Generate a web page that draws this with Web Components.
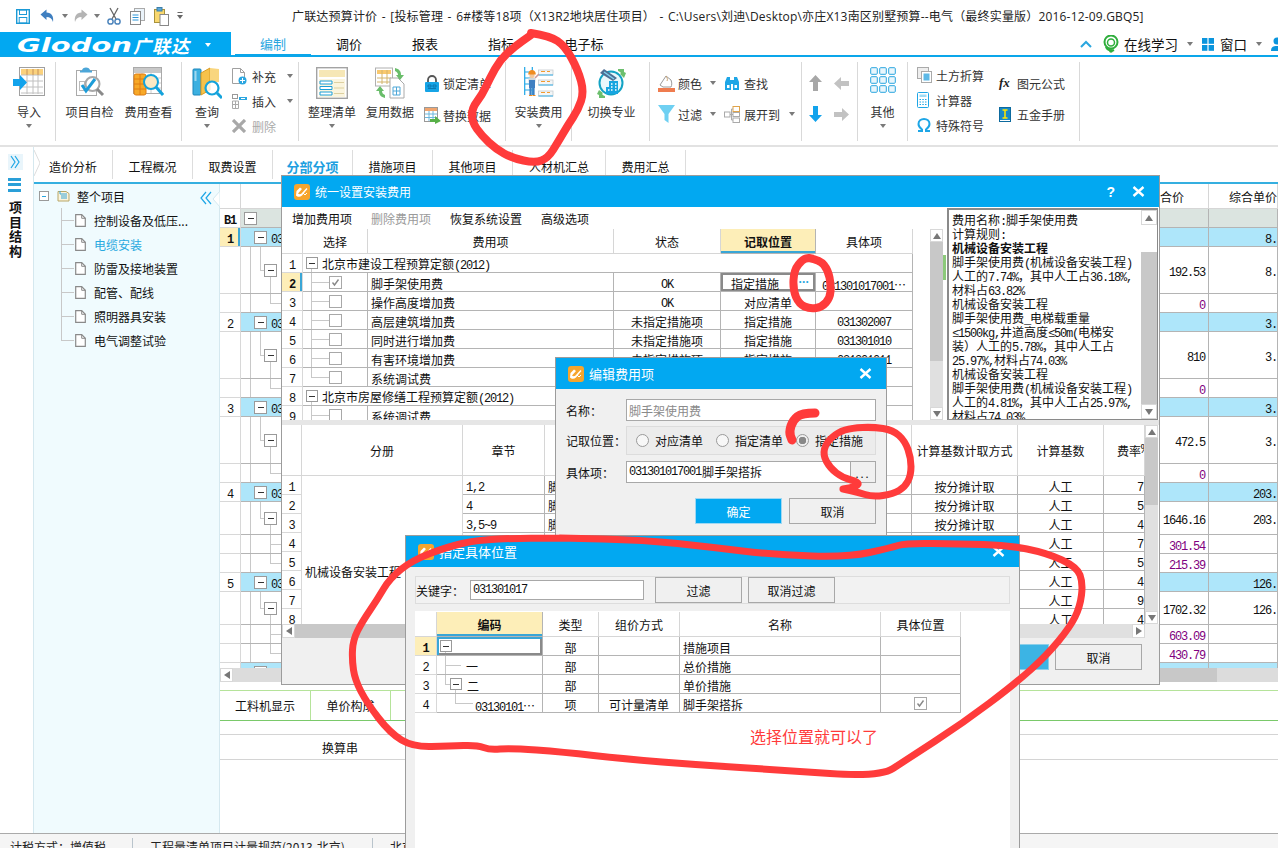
<!DOCTYPE html>
<html lang="zh">
<head>
<meta charset="utf-8">
<title>广联达预算计价</title>
<style>
html,body{margin:0;padding:0;background:#fff;overflow:hidden}
body{font:12px "Noto Sans CJK SC","Liberation Sans",sans-serif;color:#111}
</style>
</head>
<body>
<gl-app></gl-app>
<script>
const UI='"Noto Sans CJK SC","Liberation Sans",sans-serif';
const TB='"Liberation Serif","Noto Sans CJK SC",serif';
const MS='font-family:\'Liberation Mono\',monospace;letter-spacing:-1.2px';
const m=s=>s.replace(/[\x21-\x7e≤]+/g,x=>`<span style="${MS}">${x}</span>`);
const ICONS={
save:[14,15,`<rect x=".7" y=".7" width="12.6" height="13.6" fill="#fff" stroke="#1b9ad6" stroke-width="1.4"/><rect x="3.5" y="1" width="7" height="4.5" fill="none" stroke="#1b9ad6"/><rect x="3.2" y="8.5" width="7.6" height="5.5" fill="none" stroke="#1b9ad6"/>`],
undo:[14,14,`<path d="M.5 5.5 6.5 .5v3c5 0 7.5 4 6.500 9.500-1-3.500-3-5-6.500-5v3z" fill="#3f7fc0"/>`],
redo:[14,14,`<path d="M13.500 5.500 7.500 .5v3c-5 0-7.500 4-6.500 9.500 1-3.500 3-5 6.500-5v3z" fill="#b4b4b4"/>`],
cut:[14,18,`<path d="M3 1l6 11M11 1 5 12" stroke="#666" stroke-width="1.300" fill="none"/><circle cx="3.500" cy="14.500" r="2.600" fill="none" stroke="#4f86bd" stroke-width="1.500"/><circle cx="10.500" cy="14.500" r="2.600" fill="none" stroke="#4f86bd" stroke-width="1.500"/>`],
copy:[15,17,`<rect x="4.500" y=".5" width="10" height="12" fill="#eaf3fa" stroke="#aaa"/><rect x=".5" y="3.500" width="10" height="13" fill="#fff" stroke="#888"/><path d="M2.500 7h6M2.500 9.500h6M2.500 12h6" stroke="#2f96d8"/>`],
paste:[15,19,`<rect x=".5" y="2.500" width="10" height="13" fill="#f9d86f" stroke="#a8923c"/><rect x="3" y=".5" width="5" height="3.500" fill="#5aa7d8" stroke="#3d7fa8"/><rect x="6" y="7.500" width="8.500" height="11" fill="#fff" stroke="#888"/>`],
qdd:[6,8,`<path d="M.5 .5h5" stroke="#666"/><path d="M0 3h6L3 7z" fill="#666"/>`],
import:[32,30,`<rect x="6.500" y=".5" width="25" height="28" fill="#fff" stroke="#a0a0a0"/><rect x="8" y="2" width="22" height="6" fill="#fbd27d"/><path d="M8 8h22M8 14h22M8 20h22M8 26h22M14 2v25M20 2v25M25 2v25" stroke="#c0c0c0"/><path d="M14 8V2M20 8V2M25 8V2" stroke="#e39a3b"/><path d="M0 12h7V8l7 7.500-7 7.500v-4H0z" fill="#12a3ec"/>`],
check:[30,30,`<rect x="1.500" y="3.500" width="20" height="25" fill="#fff" stroke="#aaa"/><path d="M7 3.500c0-2 2-3 4-3s4 1 4 3h2v2H5v-2z" fill="#4ca6d8"/><rect x="4.500" y="14.500" width="5" height="9" fill="#fff" stroke="#bbb"/><circle cx="17.500" cy="17" r="7" fill="#fff" stroke="#a9a9a9" stroke-width="2"/><path d="M22 22l6 6" stroke="#8a8a8a" stroke-width="3"/><path d="M7 18l4 6 9-12" fill="none" stroke="#1d9cd8" stroke-width="3"/>`],
fee:[31,30,`<rect x=".5" y=".5" width="28" height="26" fill="#fff" stroke="#aaa"/><rect x="1" y="1" width="27" height="5" fill="#c8c8c8"/><path d="M1 11h27M1 16h27M1 21h27M9 6v20M18 6v20" stroke="#ccc"/><rect x="1" y="7" width="12" height="21" rx="2" fill="#f7a928" stroke="#e07d12"/><path d="M1 12h12M1 17h12M1 22h12M7 7v21" stroke="#e07d12"/><circle cx="18" cy="15" r="7" fill="#fbe9c4" stroke="#14a3dc" stroke-width="2"/><path d="M23 20l7 8" stroke="#14a3dc" stroke-width="3"/>`],
query:[30,32,`<rect x="1" y="2" width="8" height="26" rx="1" fill="#3cb0e0" stroke="#1a86bb"/><path d="M9 6l9-5v22l-9 5z" fill="#f6c24b" stroke="#d99c25"/><path d="M18 1l9 1v13h-9z" fill="#f9d67e"/><rect x="2.500" y="4" width="2" height="10" fill="#9fd8ef"/><circle cx="20" cy="21" r="6.500" fill="#fff" fill-opacity=".8" stroke="#14a3dc" stroke-width="2.200"/><path d="M25 26l5 5" stroke="#14a3dc" stroke-width="3"/>`],
add:[15,17,`<path d="M.5 .5h8l4 4v11H.5z" fill="#fff" stroke="#a0a0a0"/><path d="M8.500 .5v4h4" fill="none" stroke="#a0a0a0"/><circle cx="10.500" cy="12.500" r="4" fill="#2ba6e0"/><path d="M8 12.500h5M10.500 10v5" stroke="#fff"/>`],
insert:[15,15,`<rect x=".5" y=".5" width="5" height="4" fill="none" stroke="#999"/><rect x="7" y="3" width="8" height="3" fill="#2ba6e0"/><path d="M9 4.500h4" stroke="#fff"/><path d="M.5 7h6v7.500h-6zM.5 10.500h6M3.500 7v7.500" fill="none" stroke="#aaa"/>`],
del:[14,14,`<path d="M1 1l12 12M13 1 1 13" stroke="#a8a8a8" stroke-width="3.200"/>`],
org:[32,32,`<rect x=".7" y=".7" width="30.600" height="30.600" fill="#fff" stroke="#a3a3a3" stroke-width="1.400"/><rect x="3" y="3" width="26" height="7" fill="#f6e7b6"/><path d="M3 12h26v18H3z" fill="#fbf5de"/><path d="M4 14h12v3H4zM4 19.500h12v3H4zM4 25h12v3H4z" fill="#fff" stroke="#1c9fd8"/><path d="M18 15.500h10M18 21h10M18 26.500h10" stroke="#ddd0a0"/>`],
reuse:[30,32,`<rect x=".5" y="1" width="17" height="18" fill="#fff" stroke="#b0b0b0"/><rect x="2" y="3" width="14" height="4" fill="#f9c96e"/><path d="M2 11h14M2 15h14M7 3v14M12 3v14" stroke="#d3b46d"/><path d="M15 11h8l6 6v14H15z" fill="#fff" stroke="#aaa"/><path d="M18 20h7v8h-7zM18 24h7M21.500 20v8" fill="none" stroke="#4fa8d8"/><path d="M20 1c4 1 6 3 6 7h3l-4 5-4-5h2c0-2-1-3-3-4z" fill="#69bd6a"/><path d="M10 31c-4-1-6-3-6-7H1l4-5 4 5H7c0 2 1 3 3 4z" fill="#69bd6a"/>`],
lock:[16,17,`<path d="M4 7V5a4 4 0 018 0v2" fill="none" stroke="#555" stroke-width="1.800"/><rect x="1" y="7" width="14" height="10" rx="1" fill="#16a4e6"/><path d="M4 10h3v2H4zM9 10h3v2H9zM4 13.500h8" stroke="#0a6fa6" stroke-width=".8" fill="none"/>`],
replace:[17,17,`<rect x=".5" y=".5" width="13" height="14" fill="#fff" stroke="#999"/><rect x="1" y="1" width="12" height="3" fill="#f1a56e"/><path d="M1 7h12M1 10.500h12M5 4v10M9 4v10" stroke="#6cb7dc"/><path d="M6 12h5V9l6 5-6 3v-2H6z" fill="#58b048"/>`],
install:[30,30,`<path d="M.7 0v28M8.300 0v28M.7 5h7.600M.7 11h7.600M.7 17h7.600M.7 23h7.600" stroke="#1ea6e6" stroke-width="1.200" fill="none"/>
<g fill="#f4f6f7" stroke="#c6ccd0" stroke-width=".8"><rect x="14.500" y="3" width="14.500" height="5"/><rect x="14.500" y="13" width="14.500" height="5"/><rect x="14.500" y="24" width="14.500" height="5"/></g>
<path d="M17 4.500h4M23 4.500h3" stroke="#f39a2e"/><path d="M14.500 8h14.500M14.500 18h14.500M14.500 29h14.500" stroke="#39aee6"/><path d="M17 14.500h4M23 14.500h3M17 25.500h4M23 25.500h3" stroke="#f39a2e"/>
<path d="M11 11l4-4" stroke="#c99" stroke-width="1.600"/><circle cx="8" cy="8.500" r="2.600" fill="#f3c79c"/><path d="M4.200 7.500c0-3 1.600-4.500 3.800-4.500s3.800 1.500 3.800 4.500z" fill="#f08c21"/><rect x="4.500" y="11" width="7" height="4.500" fill="#cfd6da"/><rect x="5" y="13" width="6" height="8" fill="#3f80c2"/><path d="M6.500 21v7M9.500 21v7" stroke="#3f80c2" stroke-width="2.200"/><path d="M5 28.500h3M8.500 28.500h3" stroke="#f08c21" stroke-width="1.200"/>`],
switch:[30,32,`<circle cx="14" cy="16" r="11.500" fill="#e8f7fc" stroke="#13a3c4" stroke-width="2"/><path d="M3 6l4-4 13 9-4 3z" fill="#4f6f94"/><path d="M7 5l10 7" stroke="#7fd3ef" stroke-width="1.400"/><path d="M12 14h9v13H9v-7h3z" fill="#17a5e0"/><path d="M14 17h1.500M18 17h1.500M14 20h1.500M18 20h1.500M11 23h1.500M14 23h1.500M18 23h1.500" stroke="#fff" stroke-width="1.500"/><path d="M21 2l6 0v3l2 1-2 5-4-4 1-1c-1-1-2-2-3-2z" fill="#6cbf6e"/><path d="M8 31l-6 0v-3l-2-1 2-4 4 3-1 1c1 1 2 2 3 2z" fill="#6cbf6e"/>`],
color:[17,18,`<path d="M2 11 8 2l5 4c1 3 1 5 0 7H5z" fill="#fff" stroke="#9a9a9a"/><path d="M8 2c1 2 2 3 1 5" stroke="#c9a271" fill="none"/><rect y="14" width="17" height="4" fill="#ef7c4f"/>`],
find:[16,16,`<path d="M1 7l2-5h3v3h4V2h3l2 5v8h-6V9H7v6H1z" fill="#1ea6e6"/><rect x="3" y="10" width="2.500" height="3" fill="#fff"/><rect x="10.500" y="10" width="2.500" height="3" fill="#fff"/>`],
filter:[17,18,`<path d="M0 0h17L10.500 9v9l-4-3V9z" fill="#6fd0f2"/>`],
expand:[16,17,`<rect x=".5" y="6" width="5.500" height="5" fill="#fff" stroke="#aaa"/><rect x="9" y=".5" width="6.500" height="5" fill="#fff" stroke="#e0a44b"/><rect x="9" y="6.500" width="6.500" height="4" fill="#fff" stroke="#aaa"/><rect x="9" y="12" width="6.500" height="4.500" fill="#fff" stroke="#aaa"/><path d="M6 8.500h3M7.500 3v11M7.500 3H9M7.500 14H9" stroke="#aaa" fill="none"/>`],
aup:[13,16,`<path d="M6.500 0 13 7H9v9H4V7H0z" fill="#a7a7a7"/>`],
aleft:[15,13,`<path d="M0 6.500 7 0v4h8v5H7v4z" fill="#c2c2c2"/>`],
adown:[13,16,`<path d="M6.500 16 13 9H9V0H4v9H0z" fill="#12a3ec"/>`],
aright:[15,13,`<path d="M15 6.500 8 0v4H0v5h8v4z" fill="#c2c2c2"/>`],
other:[26,26,`<g fill="#e9f6fc" stroke="#2aa6df"><rect x=".7" y=".7" width="6.600" height="6.600" rx="1"/><rect x="9.700" y=".7" width="6.600" height="6.600" rx="1"/><rect x="18.700" y=".7" width="6.600" height="6.600" rx="1"/><rect x=".7" y="9.700" width="6.600" height="6.600" rx="1"/><rect x="9.700" y="9.700" width="6.600" height="6.600" rx="1"/><rect x="18.700" y="9.700" width="6.600" height="6.600" rx="1"/><rect x=".7" y="18.700" width="6.600" height="6.600" rx="1"/><rect x="9.700" y="18.700" width="6.600" height="6.600" rx="1"/><rect x="18.700" y="18.700" width="6.600" height="6.600" rx="1"/></g>`],
earth:[15,16,`<rect x=".5" y=".5" width="11" height="11" fill="#eee" stroke="#aaa"/><rect x="4.500" y="4.500" width="10" height="11" fill="#fff" stroke="#aaa"/><rect x="6.500" y="6.500" width="6" height="7" fill="#5cb8e6"/>`],
calc:[12,16,`<rect x=".5" y=".5" width="11" height="15" rx="1" fill="#fff" stroke="#1ea6e6"/><rect x="2.500" y="2.500" width="7" height="2.500" fill="#9fdcf5"/><path d="M2.500 7.500h1.500M5.300 7.500h1.500M8 7.500h1.500M2.500 10h1.500M5.300 10h1.500M8 10h1.500M2.500 12.500h1.500M5.300 12.500h1.500M8 12.500h1.500" stroke="#1ea6e6"/>`],
omega:[14,14,`<path d="M1 13h4v-1.500C3 10 1.500 8.500 1.500 6 1.500 3 4 1 7 1s5.500 2 5.500 5c0 2.500-1.500 4-3.500 5.500V13h4" fill="none" stroke="#1ea6e6" stroke-width="2"/>`],
manual:[12,15,`<rect x=".5" y=".5" width="11" height="14" fill="#1789c9" stroke="#0d6a9e"/><path d="M3.500 3h5M6 3v8M3.500 11h5" stroke="#ffe600" stroke-width="1.500"/><path d="M1 13.500h10" stroke="#fff"/>`],
up:[12,8,`<path d="M1 7l5-5 5 5" fill="none" stroke="#2aa6df" stroke-width="2"/>`],
headset:[16,18,`<circle cx="8" cy="7" r="6.500" fill="none" stroke="#2fae3c" stroke-width="2"/><circle cx="8" cy="7.500" r="3.500" fill="#fff" stroke="#2fae3c" stroke-width="1.500"/><path d="M3 12c2 4 6 4 8 3" fill="none" stroke="#2fae3c" stroke-width="2.400"/><circle cx="8" cy="16" r="1.800" fill="#2fae3c"/>`],
win:[12,13,`<rect width="5.400" height="5.800" fill="#0b95dd"/><rect x="6.600" width="5.400" height="5.800" fill="#0b95dd"/><rect y="7" width="5.400" height="5.800" fill="#0b95dd"/><rect x="6.600" y="7" width="5.400" height="5.800" fill="#0b95dd"/>`],
user:[12,14,`<circle cx="6" cy="4" r="3.500" fill="#0b95dd"/><path d="M0 14c0-4 2-5 6-5s6 1 6 5z" fill="#0b95dd"/>`],
doc:[11,13,`<path d="M.7.7h6l3.600 3.600v8H.7z" fill="#fff" stroke="#8a8a8a" stroke-width="1.200"/><path d="M6.700.7v3.600h3.600" fill="none" stroke="#8a8a8a"/>`],
book:[13,12,`<path d="M1 1.500h8l3 2v7.500H1z" fill="#fbf4dc" stroke="#b8a768"/><path d="M3 1v3h7M4 6h6M4 8h6" stroke="#3ba6d8" fill="none"/>`],
dlg:[16,16,`<rect width="16" height="16" rx="3" fill="#f6a52d"/><path d="M2.500 7 6 3.500l2 1.500-4 4.500c1 1 2.500 1 3.500 0l5-5.500 1 1-5.500 6.500c-2 1.800-4.500 1.500-6 0z" fill="#fff"/><path d="M9 9l2 2 2-2" stroke="#fff" fill="none"/>`],
x:[13,11,`<path d="M1.500 1l10 9M11.500 1l-10 9" stroke="#fff" stroke-width="2.400"/>`],
dchev:[12,14,`<path d="M6 1 1 7l5 6M11 1 6 7l5 6" fill="none" stroke="#1ea6e6" stroke-width="1.200"/>`],
rchev:[11,14,`<path d="M1 1l4 6-4 6M5 1l4 6-4 6" fill="none" stroke="#1ea6e6" stroke-width="1.200"/>`]
};
const make=(name,styles,markup,setup)=>{customElements.define(name,class extends HTMLElement{
  connectedCallback(){ if(this.shadowRoot) return;
    const r=this.attachShadow({mode:'open'});
    const mk=typeof markup==='function'?markup(this):markup;
    r.innerHTML=`<style>${styles}</style>${mk}`;
    if(setup) setup(this,r);
  }
});};
const dd=(ml=0)=>`<i style="display:inline-block;width:0;height:0;border:3px solid transparent;border-top:4px solid #7a7a7a;border-bottom:0;margin-left:${ml}px;flex:none"></i>`;
make('gl-icon',':host{display:inline-flex;flex:none;line-height:0}',h=>{
  const [w,ht,s]=ICONS[h.getAttribute('n')];
  return `<svg xmlns="http://www.w3.org/2000/svg" width="${w}" height="${ht}" viewBox="0 0 ${w} ${ht}">${s}</svg>`;});

/* ---------- top chrome ---------- */
make('gl-titlebar',`:host{display:flex;height:32px;align-items:center;background:#fff;font:12px "Open Sans","Noto Sans CJK SC",sans-serif;color:#222;flex:none;white-space:nowrap}
.q{display:flex;align-items:center;width:292px;flex:none;padding-left:16px;box-sizing:border-box}
span{word-spacing:1.2px;letter-spacing:.18px}`,
`<div class="q"><gl-icon n="save"></gl-icon><gl-icon n="undo" style="margin-left:10px"></gl-icon>${dd(8)}<gl-icon n="redo" style="margin-left:6px"></gl-icon>${dd(6)}<gl-icon n="cut" style="margin-left:7px"></gl-icon><gl-icon n="copy" style="margin-left:9px"></gl-icon><gl-icon n="paste" style="margin-left:9px"></gl-icon><gl-icon n="qdd" style="margin-left:8px"></gl-icon></div>
<span>广联达预算计价 - [投标管理 - 6#楼等18项（X13R2地块居住项目） - C:\\Users\\刘迪\\Desktop\\亦庄X13南区别墅预算--电气（最终实量版）2016-12-09.GBQ5]</span>`);

make('gl-tabbar',`:host{display:flex;height:25px;box-sizing:border-box;border-bottom:2px solid #0aa6ea;flex:none;font:13px ${UI};color:#111;overflow:hidden;white-space:nowrap}
.logo{width:231px;height:25px;background:#02a8f1;color:#fff;display:flex;align-items:center;flex:none;position:relative;overflow:hidden}
.g{font:italic bold 20px "DejaVu Sans",sans-serif;display:inline-block;transform:scaleX(1.45);transform-origin:0 50%;margin-left:17px;width:116px;letter-spacing:0}
.c{font:italic bold 18px ${UI};letter-spacing:1px}
.tab{width:76px;text-align:center;line-height:23px;flex:none}
.on{color:#2aa6df;background:#fff;margin-left:4px;box-shadow:inset 0 -1px #0aa6ea}
.w{width:90px}
.r{margin-left:auto;width:198px;flex:none;display:flex;align-items:center;padding-top:1px;height:23px;box-sizing:border-box;font-size:13.500px;overflow:hidden}
.r span{flex:none}`,
`<div class="logo"><span class="g">Glodon</span><span class="c">广联达</span>${dd(15).replace(/#7a7a7a/,'#fff')}</div>
<div class="tab on">编制</div><div class="tab">调价</div><div class="tab">报表</div><div class="tab">指标</div><div class="tab w">电子标</div>
<div class="r"><gl-icon n="up" style="margin-left:0"></gl-icon><gl-icon n="headset" style="margin-left:11px"></gl-icon><span style="margin-left:5px">在线学习</span>${dd(9)}<gl-icon n="win" style="margin-left:9px"></gl-icon><span style="margin-left:6px">窗口</span>${dd(9)}<gl-icon n="user" style="margin-left:9px;flex:none"></gl-icon></div>`);

make('gl-ribbon',`:host{display:flex;height:90px;box-sizing:border-box;border-bottom:2px solid #e2e2e2;flex:none;font:12px ${UI};color:#333;background:#fff;padding-top:5px}`,`<slot></slot>`);
make('gl-group',`:host{display:flex;height:79px;box-sizing:border-box;border-right:1px solid #d9d9d9;flex:none}`,'<slot></slot>',(h)=>{
  h.style.width=h.getAttribute('w')+'px'; if(h.hasAttribute('pl')) h.style.paddingLeft=h.getAttribute('pl')+'px';});
make('gl-big',`:host{display:flex;flex-direction:column;align-items:center;flex:none;white-space:nowrap;color:#333}
.i{height:33px;margin-top:5px;display:flex;align-items:flex-start;justify-content:center}
.t{line-height:14px;margin-top:5px}
.a{height:4px;margin-top:5px;display:flex}`,
h=>`<div class="i"><gl-icon n="${h.getAttribute('n')}"></gl-icon></div><div class="t"><slot></slot></div><div class="a">${h.hasAttribute('dd')?dd():''}</div>`,
h=>{h.style.width=h.getAttribute('w')+'px';});
make('gl-stack',`:host{display:flex;flex-direction:column;flex:none}`,'<slot></slot>',h=>{
  h.style.paddingTop=(h.getAttribute('pt')||0)+'px'; h.style.gap=(h.getAttribute('gap')||0)+'px';
  if(h.hasAttribute('w')) h.style.width=h.getAttribute('w')+'px'; if(h.hasAttribute('ml')) h.style.marginLeft=h.getAttribute('ml')+'px';});
make('gl-small',`:host{display:flex;align-items:center;height:20px;white-space:nowrap;color:#333}
:host([dis]){color:#aaa}
.b{display:flex;justify-content:flex-start;align-items:center;flex:none}
i.f{font:italic bold 13px "Liberation Serif",serif;color:#222}`,
h=>{const n=h.getAttribute('n');const ic=n==='fx'?'<i class="f">fx</i>':`<gl-icon n="${n}"></gl-icon>`;
return `<div class="b" style="width:${h.getAttribute('iw')}px">${ic}</div><slot></slot>${h.hasAttribute('dd')?dd(+h.getAttribute('dd')):''}`;});

/* ---------- left rail + tree ---------- */
make('gl-nav',`:host{display:flex;flex-direction:column;align-items:center;width:34px;box-sizing:border-box;border-right:1px solid #d5e8ef;flex:none;font:bold 13px ${UI};color:#111}
.t{width:15px;height:16px;background:#e9f5fb;margin-top:7px;margin-right:3px;display:flex;align-items:center;justify-content:center}
.h{width:13px;height:3px;background:#2a9fd8;margin-right:4px;box-shadow:0 5px 0 #2a9fd8,0 11px 0 #2a9fd8;margin-top:8px}
.v{margin-top:20px;margin-right:3px;writing-mode:vertical-rl;letter-spacing:1.400px;line-height:14px;text-orientation:upright}`,
`<div class="t"><gl-icon n="rchev"></gl-icon></div><div class="h"></div><div class="v">项目结构</div>`);
const L='#c8c8c8';
const ln=(x,y,w,h,c=L)=>`linear-gradient(${c},${c}) ${x} ${y}/${w} ${h} no-repeat`;
make('gl-tree',`:host{display:block;width:186px;flex:none;box-sizing:border-box;background:#f0fbfe;border-right:1px solid #d5e8ef;font:12px ${UI};color:#111;position:relative}
.r{display:flex;align-items:center;height:24px;white-space:nowrap}
.bx{width:8px;height:8px;border:1px solid #9a9a9a;background:${ln('center','center','4px','1px','#2aa6df')} #fff;margin-left:5px;flex:none}
.sel{color:#29a9e0}
svg.n{position:absolute;right:-1px;top:7px}`,
()=>{const it=['控制设备及低压...','电缆安装','防雷及接地装置','配管、配线','照明器具安装','电气调整试验'];
return `<div class="r"><i class="bx"></i><gl-icon n="book" style="margin-left:8px"></gl-icon><span style="margin-left:7px;font-size:12px">整个项目</span><gl-icon n="dchev" style="margin-left:auto;margin-right:7px;margin-top:4px"></gl-icon></div>`+
it.map((t,i)=>`<div class="r ${i==1?'sel':''}" style="padding-left:41px;background:${ln('27px','0','1px',i==5?'50%':'100%')},${ln('27px','50%','13px','1px')}"><gl-icon n="doc"></gl-icon><span style="margin-left:8px">${t}</span></div>`).join('')+
`<svg class="n" width="8" height="16" viewBox="0 0 8 16"><path d="M8 0 1 8l7 8z" fill="#fff" stroke="#d5e8ef"/></svg>`;});

make('gl-pagetabs',`:host{display:flex;height:37px;box-sizing:border-box;border-bottom:2px solid #35afe0;flex:none;font:12px ${UI};color:#111;padding-top:3px;align-items:flex-start}
.t{height:29px;line-height:34px;text-align:center;border-right:1px solid #ddd;flex:none;white-space:nowrap}
.on{color:#1e9fe0;font-weight:bold;font-size:13px}
svg{flex:none}`,
()=>{const T=[['造价分析',73,0,6],['工程概况',80],['取费设置',80],['分部分项',80,1],['措施项目',80],['其他项目',80],['人材机汇总',93],['费用汇总',80]];
return `<svg width="6" height="29" viewBox="0 0 6 29"><path d="M0 0l6 13L0 26" fill="none" stroke="#ddd"/></svg>`+T.map(([t,w,a,p])=>`<div class="t ${a?'on':''}" style="width:${w}px;box-sizing:border-box;padding-right:${p||0}px">${t}</div>`).join('');});

/* ---------- generic table ---------- */
const TCSS=`:host{display:block;overflow:hidden;background:#fff;font:12px ${TB};color:#111;flex:none}
.g{display:grid}
.c{border-right:1px solid #b4b4b4;border-bottom:1px solid #b4b4b4;display:flex;align-items:center;justify-content:center;white-space:nowrap;overflow:hidden;min-width:0;box-sizing:border-box;background-color:#fff;padding-top:2px}
.l{justify-content:flex-start;padding-left:3px}
.r{justify-content:flex-end;padding-right:3px}
.n{border-color:#d8d8d8}
.h{border-color:#d6d6d6;font-family:${UI};padding-top:0}
.cn{font-family:${UI}}
.s{background-color:#fdeeb8;font-weight:bold;box-shadow:inset -2px 0 #3aa6d6}
.a{background-color:#fdeeb8;font-weight:bold;box-shadow:inset 0 -2px #3aa6d6;font-family:${UI};padding-top:0}
.b{background-color:#aee6fa}
.gh{background-color:#dbe4e0}
.p{color:#800080}
.box{display:inline-block;width:10px;height:10px;border:1px solid #9a9a9a;background:${ln('center','center','6px','1px','#333')} #fff;flex:none;margin-top:-2px}
.m{width:11px;height:11px}
.chk{display:inline-flex;width:11px;height:11px;border:1px solid #a8a8a8;background:#fff;flex:none;margin-top:-2px}
.sc{box-shadow:inset 0 0 0 2px #8a8a8a;justify-content:flex-start;padding-left:10px;position:relative}
.dots{position:absolute;right:6px;top:2px;color:#2aa6df;font:bold 12px "Liberation Sans",sans-serif;letter-spacing:-.5px}
.cur{box-shadow:inset 2px 2px 0 0 #3aa6d6,inset -2px -2px 0 #8a8a8a}
.nm{padding-top:6px}
.sh{position:relative;top:2px}`;
const check=`<i class="chk"><svg width="11" height="11" viewBox="0 0 11 11"><path d="M2.500 5.500l2 2.500 4-5.500" fill="none" stroke="#888" stroke-width="1.400"/></svg></i>`;
const empty=`<i class="chk"></i>`;
const ELL='<span style="font-family:\'Noto Sans CJK SC\'">…</span>';
const renderCells=rows=>rows.flat().map(c=>{ if(typeof c==='string') c={t:c};
  const st=[c.st||'']; if(c.sp) st.push(`grid-column:span ${c.sp}`); if(c.rs) st.push(`grid-row:span ${c.rs}`); if(c.bg) st.push(`background:${c.bg}`);
  const t=c.t||''; const body=t.includes('<')?t:m(t);
  const nm=/^[\x21-\x7e]+$/.test(t)&&!/\bh\b/.test(c.c||'')?' nm':'';
  return `<div class="c ${c.c||''}${nm}" style="${st.join(';')}">${body}</div>`;}).join('');
const makeTable=(name,o)=>make(name,TCSS,()=>`<div class="g" style="grid-template-columns:${o.cols.map(x=>x+'px').join(' ')};grid-template-rows:${o.rows};grid-auto-rows:${o.auto||19}px">${renderCells(o.data())}</div>`,h=>{h.style.width=o.cols.reduce((a,b)=>a+b,0)+'px';h.style.height=o.h+'px';});

/* main grid */
const V=ln('9px','0','1px','100%');
const blueRow=(n,sel,r1,txt='03')=>[
 {t:n,c:sel?'n s':'n'},
 {t:`<i class="box m" style="margin-left:13px"></i>${txt?`<span class="sh" style="margin-left:4px;${MS}">${txt}</span>`:''}`,c:'b',st:'justify-content:flex-start'},
 {t:'',c:'b'},
 {t:r1,c:'b r',st:'padding-right:0'}];
const sub=(kind,v1,v2,p)=>{let bg=V,t='';
 if(kind==='box'){bg+=','+ln('19px','0','1px','50%')+','+ln('19px','50%','4px','1px')+','+ln('29px','100%','1px','50%');t='<i class="box m" style="margin-left:23px"></i>';}
 if(kind==='mid'){bg+=','+ln('29px','0','1px','100%')+','+ln('29px','50%','11px','1px');}
 if(kind==='end'){bg+=','+ln('29px','0','1px','50%')+','+ln('29px','50%','11px','1px');}
 return [{t:'',c:'n'},{t,bg,st:'justify-content:flex-start'},{t:v1,c:'r'+(p?' p':'')},{t:v2,c:'r',st:'padding-right:0'}];};
makeTable('gl-main-table',{cols:[21,894,74,69],h:484,
 rows:'25px 19px 19px 47px 19px 19px 47px 19px 19px 47px 19px 19px 33px 19px 19px 19px 33px 19px 19px 19px',
 data:()=>[
  [{t:'',c:'h'},{t:'',c:'h'},{t:'合价',c:'h',st:'justify-content:flex-start;padding-left:25px'},{t:'综合单价',c:'h',st:'justify-content:flex-start;padding-left:20px'}],
  [{t:'B1',c:'n',st:'font-weight:bold'},{t:'<i class="box m" style="margin-left:3px"></i>',c:'gh',st:'justify-content:flex-start'},{t:'',c:'gh'},{t:'',c:'gh'}],
  blueRow('1',1,'8.'),sub('box','192.53','8.'),sub('end','0','',1),
  blueRow('2',0,'3.'),sub('box','810','3.'),sub('end','0','',1),
  blueRow('3',0,'3.'),sub('box','472.5','3.'),sub('end','0','',1),
  blueRow('4',0,'203.'),sub('box','1646.16','203.'),sub('mid','301.54','',1),sub('end','215.39','',1),
  blueRow('5',0,'126.'),sub('box','1702.32','126.'),sub('mid','603.09','',1),sub('end','430.79','',1),
  blueRow('',0,'','')
 ]});

/* cost table */
const T8=(top)=>`${ln('8px','0','1px',top)},${ln('8px','50%','18px','1px')}`;
const costRow=(n,name,chk,st,pos,item,last,sel)=>[
 {t:n,c:sel?'n s':'n'},
 {t:chk,bg:T8(last?'50%':'100%')},
 {t:name,c:'l cn'},
 {t:st,c:/^[A-Z]/.test(st)?'':'cn'},
 pos==='SEL'?{t:'<span>指定措施</span><span class="dots">···</span>',c:'sc cn'}:{t:pos,c:'cn'},
 {t:item}];
const groupRow=(n,t)=>[{t:n,c:'n'},{sp:5,t:`<i class="box" style="margin-left:3px"></i><span class="cn" style="margin-left:4px">${m(t)}</span>`,st:'justify-content:flex-start',bg:ln('8px','100%','1px','50%')}];
makeTable('gl-cost-table',{cols:[21,65,246,107,95,97],h:191,rows:'25px',
 data:()=>[
  [{t:'',c:'h'},{t:'选择',c:'h'},{t:'费用项',c:'h'},{t:'状态',c:'h'},{t:'记取位置',c:'a'},{t:'具体项',c:'h'}],
  groupRow('1','北京市建设工程预算定额(2012)'),
  costRow('2','脚手架使用费',check,'OK','SEL',`<span class="sh"><span style="${MS}">031301017001</span>${ELL}</span>`,0,1),
  costRow('3','操作高度增加费',empty,'OK','对应清单',''),
  costRow('4','高层建筑增加费',empty,'未指定措施项','指定措施','031302007'),
  costRow('5','同时进行增加费',empty,'未指定措施项','指定措施','031301010'),
  costRow('6','有害环境增加费',empty,'未指定措施项','指定措施','031301011'),
  costRow('7','系统调试费',empty,'','','',1),
  groupRow('8','北京市房屋修缮工程预算定额(2012)'),
  costRow('9','系统调试费',empty,'','','')
 ]});

/* rule table */
const ruleVals=[['1,2','7'],['4','5'],['3,5~9','4'],['','7'],['','5'],['','4'],['','9'],['','4'],['',''],['','']];
makeTable('gl-rule-table',{cols:[20,161,82,367,106,86,41],h:199,rows:'51px',
 data:()=>{const head=[{t:'',c:'h'},{t:'分册',c:'h'},{t:'章节',c:'h'},{t:'',c:'h'},{t:'计算基数计取方式',c:'h'},{t:'计算基数',c:'h'},{t:'费率%',c:'h',st:'justify-content:flex-start;padding-left:13px'}];
  const rows=[head];
  ruleVals.forEach(([ch,rate],i)=>{const vis=i<8;const r=[{t:vis?String(i+1):'',c:'n'}];
   if(i===0) r.push({t:'机械设备安装工程',rs:10,c:'l cn',st:'border-color:#d6d6d6'});
   r.push({t:ch,c:'l'},{t:i<3?'脚手架使用费':'',c:'l cn'},{t:i<3?'按分摊计取':'',c:'cn'},{t:vis?'人工':'',c:'cn'},{t:rate,c:'r',st:'padding-right:0;justify-content:flex-start;padding-left:33px'});
   rows.push(r);});
  return rows;}});

/* pick table */
const P=(x,y,w,h)=>ln(x,y,w,h);
makeTable('gl-pick-table',{cols:[22,106,56,81,201,80],h:102,rows:'25px',
 data:()=>[
  [{t:'',c:'h'},{t:'编码',c:'a'},{t:'类型',c:'h'},{t:'组价方式',c:'h'},{t:'名称',c:'h'},{t:'具体位置',c:'h'}],
  [{t:'1',c:'n s',st:'box-shadow:none'},{t:'<i class="box" style="margin-left:3px"></i>',c:'cur',st:'justify-content:flex-start',bg:P('8px','100%','1px','50%')},{t:'部',c:'cn'},'',{t:'措施项目',c:'l cn'},''],
  [{t:'2',c:'n'},{t:'<span class="cn" style="margin-left:29px">一</span>',st:'justify-content:flex-start',bg:P('8px','0','1px','100%')+','+P('8px','50%','16px','1px')},{t:'部',c:'cn'},'',{t:'总价措施',c:'l cn'},''],
  [{t:'3',c:'n'},{t:'<i class="box" style="margin-left:13px"></i><span class="cn" style="margin-left:5px">二</span>',st:'justify-content:flex-start',bg:P('8px','0','1px','50%')+','+P('8px','50%','6px','1px')+','+P('18px','100%','1px','50%')},{t:'部',c:'cn'},'',{t:'单价措施',c:'l cn'},''],
  [{t:'4',c:'n'},{t:`<span class="sh" style="margin-left:38px"><span style="${MS}">03130101</span>${ELL}</span>`,st:'justify-content:flex-start',bg:P('18px','0','1px','50%')+','+P('18px','50%','18px','1px')},{t:'项',c:'cn'},{t:'可计量清单',c:'cn'},{t:'脚手架搭拆',c:'l cn'},{t:check}]
 ]});

/* ---------- scrollbars ---------- */
make('gl-scroll',`:host{display:flex;flex:none;background:var(--track,#e0e0e0)}
:host([dir=v]){flex-direction:column}
.b{flex:none;background:#fff;border:1px solid #d8d8d8;box-sizing:border-box;display:flex;align-items:center;justify-content:center}
.th{flex:none;background:var(--thumb,#c8c8c8)}
i{display:block;width:0;height:0;border:4px solid transparent}`,
h=>{const d=h.getAttribute('dir'),s=+h.getAttribute('start')||0,z=+h.getAttribute('size'),bw=+h.getAttribute('b')||13,cr=+h.getAttribute('cross')||13;
 h.style[d==='v'?'width':'height']=cr+'px';
 h.style.setProperty('--thumb',h.getAttribute('thumb')||'#c8c8c8');h.style.setProperty('--track',h.getAttribute('track')||'#e0e0e0');
 const tri=(side)=>`<i style="border-${side}:6px solid #777;${side==='bottom'||side==='top'?`border-${side==='bottom'?'top':'bottom'}-width:0`:`border-${side==='left'?'right':'left'}-width:0`}"></i>`;
 const bs=d==='v'?`height:${bw}px`:`width:${bw}px`;
 const a=d==='v'?'bottom':'right',c=d==='v'?'top':'left';
 const st=`<div class="b" style="${bs}">${tri(a)}</div>`,en=h.hasAttribute('noend')?'':`<div class="b" style="${bs};margin-${d==='v'?'top':'left'}:auto">${tri(c)}</div>`;
 return st+`<div style="flex:none;${d==='v'?'height':'width'}:${s}px"></div><div class="th" style="${d==='v'?'height':'width'}:${z}px"></div>`+en;},
h=>{h.style.width=h.getAttribute('w')?h.getAttribute('w')+'px':h.style.width;h.style.height=h.getAttribute('h')?h.getAttribute('h')+'px':h.style.height;});

/* ---------- main content ---------- */
make('gl-lower',`:host{display:block;margin-top:8px;font:12px ${UI};color:#111;flex:1}
.t{display:flex;height:31px;box-sizing:border-box;border-top:1px solid #b5e39a;border-bottom:1.500px solid #7ac96a}
.t div{height:100%;display:flex;align-items:center;justify-content:center;border-right:1px solid #b5e39a;box-sizing:border-box}
.s{height:13px}
.h{height:26px;box-sizing:border-box;border:solid #d4d4d4;border-width:1px 0;display:flex;align-items:center;justify-content:center;width:100%}
.h span{width:240px;text-align:center;margin-right:auto}`,
`<div class="t"><div style="width:91px">工料机显示</div><div style="width:80px">单价构成</div></div><div class="s"></div><div class="h"><span>换算串</span></div>`);
make('gl-status',`:host{display:flex;height:15px;flex:none;overflow:hidden;background:#f5f5f5;border-top:1px solid #aaa;font:12px ${UI};color:#222;box-sizing:border-box;white-space:nowrap}
div{padding-top:4px;line-height:17px}
.sp{width:1px;height:15px;padding:0;margin-top:4px;background:#b9c4cc;flex:none}`,
`<div style="margin-left:10px;width:122px">计税方式：增值税</div><div class="sp"></div><div style="margin-left:17px;width:222px">工程量清单项目计量规范(2013-北京)</div><div class="sp"></div><div style="margin-left:17px">北京</div>`);

/* ---------- dialogs ---------- */
make('gl-dialog',`:host{position:absolute;display:flex;flex-direction:column;box-sizing:border-box;border:1px solid #9c9c9c;background:#f0f0f0;overflow:hidden;font:12px ${UI};color:#111}
.tb{height:31px;flex:none;background:#02a8f1;color:#fff;display:flex;align-items:center;padding-left:12px;box-sizing:border-box}
.tl{margin-left:5px}
.q{margin-left:auto;font:bold 14px "Liberation Sans",sans-serif;margin-right:17px}
.x{margin-right:14px}
.x.auto{margin-left:auto}`,
h=>`<div class="tb"><gl-icon n="dlg"></gl-icon><span class="tl" style="font-size:${h.getAttribute('fs')||12}px">${h.getAttribute('heading')}</span>${h.hasAttribute('help')?'<span class="q">?</span>':''}<gl-icon class="x ${h.hasAttribute('help')?'':'auto'}" n="x"></gl-icon></div><slot></slot>`,
h=>{for(const [a,p] of [['x','left'],['y','top'],['w','width'],['h','height']]) h.style[p]=h.getAttribute(a)+'px';});
make('gl-btn',`:host{display:inline-flex;align-items:center;justify-content:center;box-sizing:border-box;width:87px;height:26px;border:1px solid #a8a8a8;background:#f0f0f0;color:#111;flex:none;font:12px ${UI}}
:host([primary]){background:#02a8f1;border-color:#9fd8f3;color:#fff}
:host([muted]){background:#3cb4e4;border-color:#8ccfe9;color:#fff}`,'<slot></slot>');
make('gl-field',`:host{display:flex;align-items:center;box-sizing:border-box;height:22px;background:#fff;border:1px solid #a8a8a8;padding-left:2px;font:12px ${TB};color:#111;white-space:nowrap}
:host([dim]){color:#8a8a8a;font-family:${UI}}`,'<slot></slot>',h=>{if(h.hasAttribute('w'))h.style.width=h.getAttribute('w')+'px';});
make('gl-radio',`:host{display:flex;align-items:center;width:80px;flex:none;white-space:nowrap}
i{display:block;width:11px;height:11px;border:1px solid #9a9a9a;border-radius:50%;background:#f7f7f7;margin-right:6px;flex:none;box-sizing:content-box}
:host([on]) i{background:radial-gradient(circle,#888 0,#888 3.500px,#eee 4px)}`,'<i></i><slot></slot>');

const INFO=[['费用名称:脚手架使用费'],['计算规则:'],['机械设备安装工程',1],['脚手架使用费(机械设备安装工程)'],['人工的7.74%，其中人工占36.18%,'],['材料占63.82%'],['机械设备安装工程'],['脚手架使用费_电梯载重量'],['≤1500kg,井道高度≤50m(电梯安'],['装）人工的5.78%，其中人工占'],['25.97%,材料占74.03%'],['机械设备安装工程'],['脚手架使用费(机械设备安装工程)'],['人工的4.81%，其中人工占25.97%,'],['材料占74.03%']];
make('gl-info',`:host{display:flex;width:211px;height:212px;flex:none;box-sizing:border-box;border:solid #8a8a8a;border-width:2px 1px 1px 2px;background:#fff;margin-top:1px;font:12px ${TB};color:#111;overflow:hidden}
.b{flex:1;min-width:0;padding:4px 0 0 3px;white-space:nowrap;overflow:hidden;line-height:14px}
.b div{height:14px}`,
`<div class="b">${INFO.map(([t,b])=>`<div${b?' style="font-weight:bold"':''}>${m(t)}</div>`).join('')}</div>
<gl-scroll dir="v" cross="16" b="15" h="209" start="0" size="27" thumb="#fff" track="#c8c8c8"></gl-scroll>`);

make('gl-cost-dialog',`:host{display:contents}
.top{display:flex;height:213px;background:#fff}
.left{width:665px;flex:none;display:flex;flex-direction:column}
.menu{display:flex;height:22px;align-items:center;padding-left:10px;background:#fff;white-space:nowrap}
.menu span{margin-right:19px}
.tr{display:flex;height:191px}
.green{width:3px;height:25px;margin-top:26px;background:#8cc97a;flex:none}
.split{height:5px;background:#e6e6e6}
.mid{display:flex;height:199px;background:#fff}
.hs{display:flex;height:14px;background:#f0f0f0}
.foot{display:flex;justify-content:flex-end;gap:6px;padding:6px 17px 0 0;background:#f0f0f0}`,
`<gl-dialog x="281" y="175" w="879" h="510" heading="统一设置安装费用" help>
 <div class="top"><div class="left"><div class="menu"><span>增加费用项</span><span style="color:#9a9a9a">删除费用项</span><span>恢复系统设置</span><span>高级选项</span></div>
 <div class="tr"><gl-cost-table></gl-cost-table><div style="width:17px;flex:none"></div><gl-scroll dir="v" h="191" size="119"></gl-scroll><div class="green"></div></div></div><gl-info></gl-info></div>
 <div class="split"></div>
 <div class="mid"><gl-rule-table></gl-rule-table><gl-scroll dir="v" h="199" size="67"></gl-scroll></div>
 <div class="hs"><gl-scroll dir="h" w="863" cross="14" size="420"></gl-scroll></div>
 <div class="foot"><gl-btn muted>确定</gl-btn><gl-btn>取消</gl-btn></div>
</gl-dialog>`);

make('gl-edit-dialog',`:host{display:contents}
.b{display:flex;flex-direction:column;padding:10px 10px 0;white-space:nowrap}
.r{display:flex;align-items:center}
.k{width:60px;flex:none}
.gp{display:flex;align-items:center;width:250px;height:29px;box-sizing:border-box;background:#ececec;border:1px solid #dcdcdc;padding-left:9px}
.more{width:25px;height:22px;box-sizing:border-box;border:1px solid #a8a8a8;border-left:0;background:#f0f0f0;text-align:center;line-height:22px;letter-spacing:2px;flex:none;font-size:11px}
.act{display:flex;justify-content:flex-end;gap:7px;margin-top:15px}`,
`<gl-dialog x="555" y="357" w="332" h="190" heading="编辑费用项" fs="13"><div class="b">
 <div class="r"><span class="k">名称：</span><gl-field dim w="250">脚手架使用费</gl-field></div>
 <div class="r" style="margin-top:5px"><span class="k">记取位置：</span><div class="gp"><gl-radio>对应清单</gl-radio><gl-radio>指定清单</gl-radio><gl-radio on>指定措施</gl-radio></div></div>
 <div class="r" style="margin-top:6px"><span class="k">具体项：</span><gl-field w="225"><span style="${MS}">031301017001</span><span style="margin-left:1px">脚手架搭拆</span></gl-field><span class="more">...</span></div>
 <div class="act"><gl-btn primary>确定</gl-btn><gl-btn>取消</gl-btn></div>
</div></gl-dialog>`);

make('gl-pick-dialog',`:host{display:contents}
.b{padding:9px 9px 0;display:flex;flex-direction:column}
.tool{display:flex;align-items:center;height:28px;box-sizing:border-box;border:1px solid #dddddd;white-space:nowrap;background:#f2f2f2}
.k{width:54px;flex:none}
.t{margin-top:7px;background:#fff;height:260px;padding-top:1px}
.red{color:#ff3a3a;font-size:16px;padding-left:335px;margin-top:11px;line-height:22px}`,
`<gl-dialog x="405" y="535" w="615" h="330" heading="指定具体位置" fs="13"><div class="b">
 <div class="tool"><span class="k">关键字：</span><gl-field w="174" style="height:20px"><span style="${MS}">031301017</span></gl-field><gl-btn style="margin-left:11px">过滤</gl-btn><gl-btn style="margin-left:6px">取消过滤</gl-btn></div>
 <div class="t"><gl-pick-table></gl-pick-table><div class="red">选择位置就可以了</div></div>
</div></gl-dialog>`);

/* ---------- scribbles ---------- */
make('gl-scribble',`:host{position:absolute;left:0;top:0;width:1278px;height:848px;pointer-events:none;z-index:5;display:block}
path{fill:none;stroke:#ff3b3b;stroke-linecap:round;stroke-linejoin:round}`,
()=>{const S=[
 [8,'531,33 550,36 565,46 578,70 584,92 578,110 568,125 558,142 548,158 535,163 512,158 496,149 482,136 472,122 472,108 482,95 490,78 500,60 514,47 531,35'],
 [8,'809,258 820,260 828,270 831,285 830,298 822,307 810,309 799,304 793,290 794,270 803,259 809,258'],
 [9,'815,413 802,413 793,420 789,432 792,440'],
 [7,'843,489 857,487 859,482 843,478 830,468 823,455 826,443 838,432 852,428 873,427 893,430 905,441 911,458 911,475 905,487 893,494 873,497 857,492 843,489'],
 [7,'560,538 520,538 477,540 447,547 413,560 390,578 377,600 362,622 353,640 352,660 355,680 367,703 390,733 413,747 450,746 477,745 490,750 510,748 563,752 624,759 700,765 780,770 880,777 906,760 963,723 1016,683 1047,655 1070,627 1080,607 1083,583 1077,567 1047,553 1007,545 960,544 906,543 890,548 849,557 775,555 710,547 645,540 560,538']
];
const sm=s=>{const p=s.split(' ').map(q=>q.split(',').map(Number));let d=`M${p[0]}`;
 for(let i=1;i<p.length-1;i++){const mx=(p[i][0]+p[i+1][0])/2,my=(p[i][1]+p[i+1][1])/2;d+=`Q${p[i]} ${mx},${my}`;}
 d+=`L${p[p.length-1]}`;return d;};
return `<svg xmlns="http://www.w3.org/2000/svg" width="1278" height="848" viewBox="0 0 1278 848">${S.map(([w,s])=>`<path stroke-width="${w}" d="${sm(s)}"/>`).join('')}</svg>`;});

/* ---------- app ---------- */
make('gl-app',`:host{display:flex;flex-direction:column;position:relative;width:1278px;height:848px;overflow:hidden;background:#fff}
.work{display:flex;height:686px;flex:none}
.right{flex:1;min-width:0;display:flex;flex-direction:column}
.body{display:flex;height:649px;flex:none}
.content{flex:1;min-width:0;display:flex;flex-direction:column;overflow:hidden}`,
`<gl-titlebar></gl-titlebar><gl-tabbar></gl-tabbar>
<gl-ribbon>
 <gl-group w="56" pl="3"><gl-big n="import" w="52" dd>导入</gl-big></gl-group>
 <gl-group w="126" pl="4"><gl-big n="check" w="59">项目自检</gl-big><gl-big n="fee" w="59">费用查看</gl-big></gl-group>
 <gl-group w="117"><gl-big n="query" w="50" dd>查询</gl-big><gl-stack pt="4" gap="5"><gl-small n="add" iw="20" dd="11">补充</gl-small><gl-small n="insert" iw="20" dd="11">插入</gl-small><gl-small n="del" iw="20" dis>删除</gl-small></gl-stack></gl-group>
 <gl-group w="207"><gl-big n="org" w="66" dd>整理清单</gl-big><gl-big n="reuse" w="50">复用数据</gl-big><gl-stack pt="11" gap="12" ml="9"><gl-small n="lock" iw="19">锁定清单</gl-small><gl-small n="replace" iw="19">替换数据</gl-small></gl-stack></gl-group>
 <gl-group w="66"><gl-big n="install" w="65" dd>安装费用</gl-big></gl-group>
 <gl-group w="78" pl="2"><gl-big n="switch" w="75">切换专业</gl-big></gl-group>
 <gl-group w="152" pl="8"><gl-stack pt="11" gap="11" w="66"><gl-small n="color" iw="20" dd="8">颜色</gl-small><gl-small n="filter" iw="20" dd="8">过滤</gl-small></gl-stack><gl-stack pt="11" gap="11"><gl-small n="find" iw="20">查找</gl-small><gl-small n="expand" iw="20" dd="9">展开到</gl-small></gl-stack></gl-group>
 <gl-group w="56" pl="7"><gl-stack pt="11" gap="11" w="25"><gl-small n="aup" iw="25"></gl-small><gl-small n="adown" iw="25"></gl-small></gl-stack><gl-stack pt="11" gap="11"><gl-small n="aleft" iw="16"></gl-small><gl-small n="aright" iw="16"></gl-small></gl-stack></gl-group>
 <gl-group w="50"><gl-big n="other" w="49" dd>其他</gl-big></gl-group>
 <gl-group w="172" pl="9"><gl-stack pt="3" gap="5" w="82"><gl-small n="earth" iw="19">土方折算</gl-small><gl-small n="calc" iw="19">计算器</gl-small><gl-small n="omega" iw="19">特殊符号</gl-small></gl-stack><gl-stack pt="11" gap="11"><gl-small n="fx" iw="18">图元公式</gl-small><gl-small n="manual" iw="18">五金手册</gl-small></gl-stack></gl-group>
</gl-ribbon>
<div class="work"><gl-nav></gl-nav><div class="right"><gl-pagetabs></gl-pagetabs>
 <div class="body"><gl-tree></gl-tree><div class="content"><gl-main-table></gl-main-table><gl-scroll dir="h" w="1058" cross="14" start="100" size="884" noend track="#dcdcdc"></gl-scroll><gl-lower></gl-lower></div></div>
</div></div>
<gl-status></gl-status>
<gl-cost-dialog></gl-cost-dialog><gl-edit-dialog></gl-edit-dialog><gl-pick-dialog></gl-pick-dialog>
<gl-scribble></gl-scribble>`);
</script>
</body>
</html>
